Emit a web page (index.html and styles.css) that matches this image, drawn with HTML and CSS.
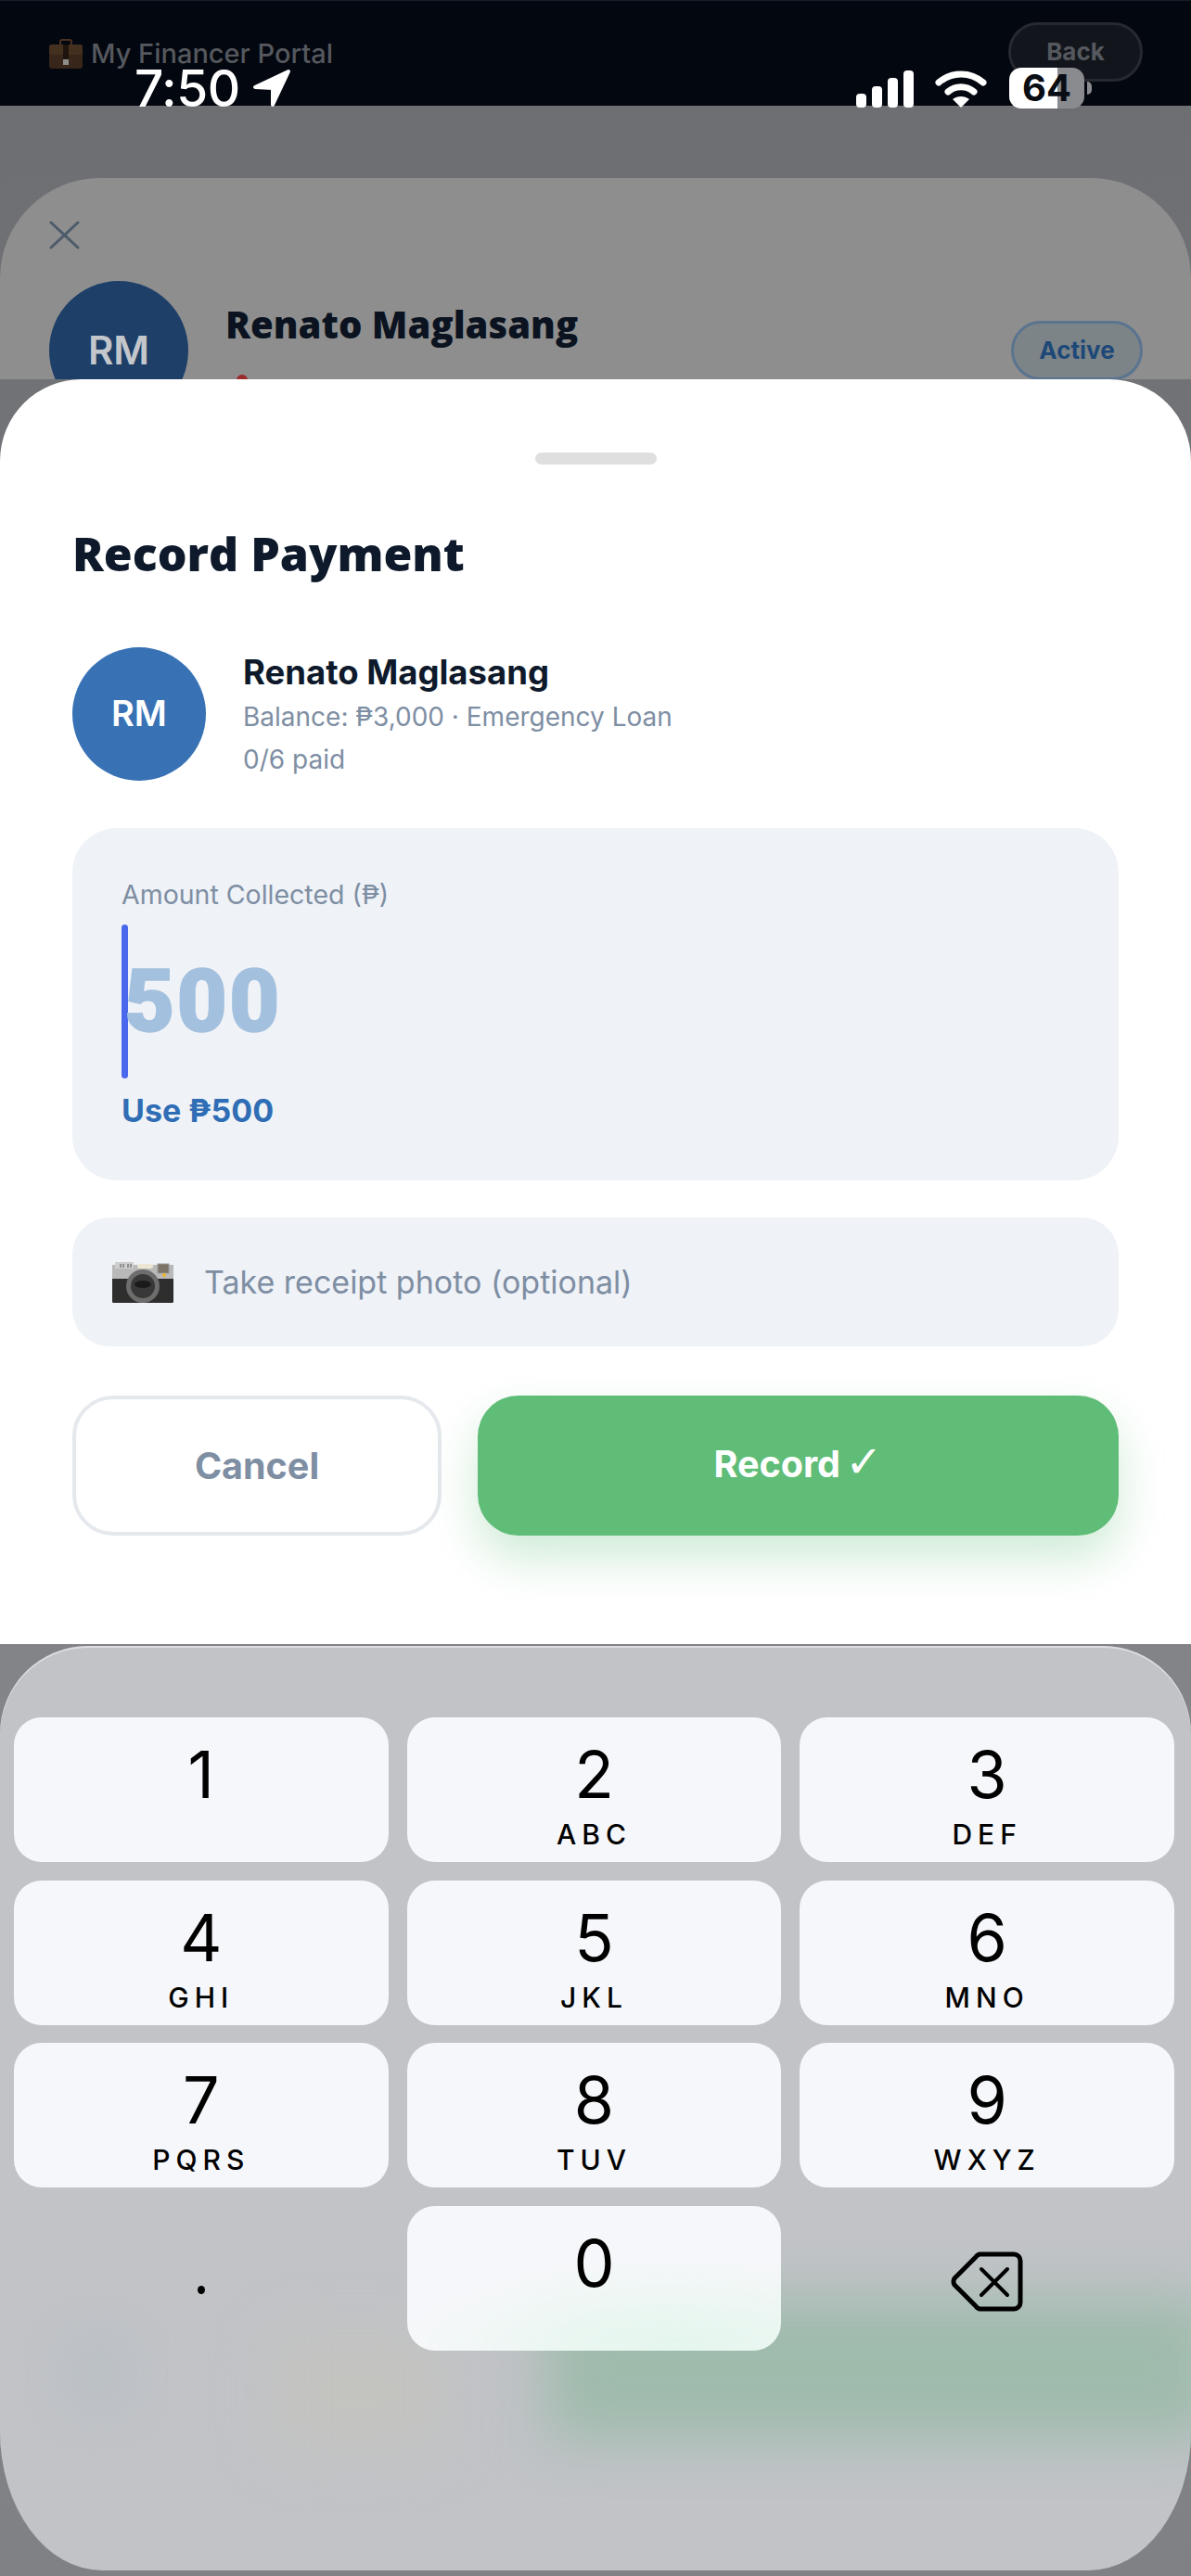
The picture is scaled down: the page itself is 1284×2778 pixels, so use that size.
FILE: index.html
```html
<!DOCTYPE html>
<html lang="en">
<head>
    <meta charset="UTF-8">
    <meta name="viewport" content="width=device-width, initial-scale=1.0">
    <title>My Financer Portal - Record Payment</title>
    <link rel="stylesheet" href="styles.css">
</head>
<body>
    <div class="screen">
        <!-- Phone status bar, sits over the app header -->
        <div class="status-bar">
            <div class="status-left">
                <span class="status-time">7:50</span>
                <svg class="status-arrow" viewBox="0 0 42 42"><path d="M39 3 L3 20 L22 21 L22 39 Z" fill="#fff" stroke="#fff" stroke-width="4" stroke-linejoin="round"/></svg>
            </div>
            <div class="status-right">
                <div class="signal">
                    <span class="bar bar-1"></span>
                    <span class="bar bar-2"></span>
                    <span class="bar bar-3"></span>
                    <span class="bar bar-4"></span>
                </div>
                <svg class="wifi" viewBox="0 0 56 40">
                    <path d="M4 13 C18 1 38 1 52 13" fill="none" stroke="#fff" stroke-width="7" stroke-linecap="round"/>
                    <path d="M14 23 C22 16 34 16 42 23" fill="none" stroke="#fff" stroke-width="7" stroke-linecap="round"/>
                    <path d="M19 31 C24 27 32 27 37 31 L28 40 Z" fill="#fff"/>
                </svg>
                <div class="battery">
                    <span class="battery-level">64</span>
                </div>
                <span class="battery-nub"></span>
            </div>
        </div>

        <!-- App header behind the modal -->
        <header class="app-bar">
            <div class="brand">
                <svg class="brand-icon" viewBox="0 0 36 32">
                    <path d="M12 7 V3 a2 2 0 0 1 2-2 h8 a2 2 0 0 1 2 2 V7" fill="none" stroke="#4a3020" stroke-width="2"/>
                    <rect x="0" y="6" width="36" height="26" rx="3" fill="#38261a"/>
                    <rect x="0" y="6" width="36" height="11" rx="3" fill="#44301f"/>
                    <rect x="15" y="6" width="6" height="18" fill="#1f140d"/>
                    <rect x="15" y="22" width="6" height="6" fill="#8d8d8a"/>
                </svg>
                <span>My Financer Portal</span>
            </div>
            <div class="back-btn">Back</div>
        </header>

        <!-- Client sheet peeking out above the payment sheet -->
        <section class="client-sheet">
            <svg class="close-icon" viewBox="0 0 33 31"><path d="M2 2 L31 29 M31 2 L2 29" stroke="#4c5b69" stroke-width="3" stroke-linecap="round"/></svg>
            <div class="client-row">
                <div class="client-avatar">RM</div>
                <div class="client-info">
                    <div class="client-name">Renato Maglasang</div>
                    <span class="client-pin"></span>
                </div>
                <div class="status-pill">Active</div>
            </div>
        </section>

        <!-- Record payment sheet -->
        <section class="pay-sheet">
            <div class="handle"></div>
            <h2 class="pay-title">Record Payment</h2>

            <div class="borrower">
                <div class="borrower-avatar">RM</div>
                <div class="borrower-info">
                    <div class="borrower-name">Renato Maglasang</div>
                    <div class="borrower-meta">Balance: ₱3,000 · Emergency Loan</div>
                    <div class="borrower-meta">0/6 paid</div>
                </div>
            </div>

            <div class="amount-card">
                <div class="amount-label">Amount Collected (₱)</div>
                <div class="amount-input">
                    <span class="caret"></span>
                    <span class="amount-value">500</span>
                </div>
                <div class="amount-hint">Use ₱500</div>
            </div>

            <div class="photo-row">
                <svg class="camera" viewBox="0 0 66 44">
                    <rect x="0" y="3" width="66" height="41" rx="1.5" fill="#2e2e2e"/>
                    <rect x="0" y="3" width="66" height="15" fill="#b9b9b9"/>
                    <rect x="3" y="0" width="20" height="7" rx="1" fill="#cfcfcf"/>
                    <path d="M9 2 v4 M12 2 v4 M17 2 v4 M20 2 v4" stroke="#666" stroke-width="1.2"/>
                    <rect x="27" y="2" width="17" height="5" rx="2.5" fill="#ece6d2"/>
                    <rect x="49" y="2" width="12" height="10" fill="#7b7467" stroke="#999" stroke-width="1"/>
                    <circle cx="33" cy="26" r="18" fill="#6d6d6d"/>
                    <circle cx="33" cy="26" r="13" fill="#383838"/>
                    <ellipse cx="33" cy="24" rx="9" ry="4" fill="#1a1a1a"/>
                    <circle cx="56" cy="14" r="2" fill="#e8b92e"/>
                </svg>
                <span class="photo-text">Take receipt photo (optional)</span>
            </div>

            <div class="action-row">
                <button class="btn-cancel">Cancel</button>
                <button class="btn-record">Record <span class="check">✓</span></button>
            </div>
        </section>

        <!-- Numeric keyboard -->
        <section class="keyboard">
            <span class="blur-blob blob-green"></span>
            <span class="blur-blob blob-blue"></span>
            <span class="blur-blob blob-sand"></span>
            <div class="keys">
                <div class="key"><span class="key-digit">1</span></div>
                <div class="key"><span class="key-digit">2</span><span class="key-letters">ABC</span></div>
                <div class="key"><span class="key-digit">3</span><span class="key-letters">DEF</span></div>
                <div class="key"><span class="key-digit">4</span><span class="key-letters">GHI</span></div>
                <div class="key"><span class="key-digit">5</span><span class="key-letters">JKL</span></div>
                <div class="key"><span class="key-digit">6</span><span class="key-letters">MNO</span></div>
                <div class="key"><span class="key-digit">7</span><span class="key-letters">PQRS</span></div>
                <div class="key"><span class="key-digit">8</span><span class="key-letters">TUV</span></div>
                <div class="key"><span class="key-digit">9</span><span class="key-letters">WXYZ</span></div>
                <div class="key key-plain"><span class="key-dot"></span></div>
                <div class="key key-zero"><span class="key-digit">0</span></div>
                <div class="key key-plain">
                    <svg class="backspace" viewBox="0 0 78 65">
                        <path d="M32 3 H68 a7 7 0 0 1 7 7 V55 a7 7 0 0 1-7 7 H32 a6 6 0 0 1-5-3 L4 36 a7 7 0 0 1 0-7 L27 6 a6 6 0 0 1 5-3 z" fill="none" stroke="#000" stroke-width="5"/>
                        <path d="M33 19 L61 47 M61 19 L33 47" stroke="#000" stroke-width="4" stroke-linecap="round"/>
                    </svg>
                </div>
            </div>
        </section>
    </div>
</body>
</html>
```

FILE: styles.css
```css
* {
    margin: 0;
    padding: 0;
    box-sizing: border-box;
}

body {
    font-family: Inter, 'Noto Sans', 'DejaVu Sans', sans-serif;
    background: #85868a;
}

.screen {
    position: relative;
    width: 1284px;
    height: 2778px;
    overflow: hidden;
    background: linear-gradient(180deg, #6c6d71 0%, #85868a 70%, #808185 100%);
}

/* Status bar */
.status-bar {
    position: absolute;
    top: 73px;
    left: 0;
    right: 0;
    height: 44px;
    padding: 0 107px 0 145px;
    display: flex;
    justify-content: space-between;
    align-items: center;
    z-index: 5;
    color: #fff;
}

.status-left {
    display: flex;
    align-items: center;
    gap: 13px;
}

.status-time {
    font-size: 55px;
    line-height: 44px;
    font-weight: 500;
    letter-spacing: -0.5px;
}

.status-arrow {
    width: 42px;
    height: 42px;
}

.status-right {
    display: flex;
    align-items: center;
}

.signal {
    display: flex;
    align-items: flex-end;
    gap: 6px;
    height: 40px;
    margin-top: 2px;
}

.bar {
    width: 11px;
    background: #fff;
    border-radius: 4px;
}

.bar-1 { height: 15px; }
.bar-2 { height: 23px; }
.bar-3 { height: 32px; }
.bar-4 { height: 40px; }

.wifi {
    width: 56px;
    height: 40px;
    margin: 2px 24px 0 23px;
}

.battery {
    width: 81px;
    height: 44px;
    border-radius: 13px;
    background: linear-gradient(90deg, #fff 0, #fff 64%, #8a8b8f 64%, #8a8b8f 100%);
    color: #0a0d14;
    text-align: center;
    font-size: 40px;
    line-height: 44px;
    font-weight: 700;
}

.battery-nub {
    width: 5px;
    height: 14px;
    margin-left: 3px;
    background: #8a8b8f;
    border-radius: 0 5px 5px 0;
}

/* App header */
.app-bar {
    height: 114px;
    padding: 23px 52px 0 53px;
    background: #03070f;
    border-top: 1px solid #1a1d28;
    display: flex;
    justify-content: space-between;
    align-items: flex-start;
}

.brand {
    display: flex;
    align-items: center;
    gap: 9px;
    margin-top: 17px;
    color: #55585e;
    font-size: 29px;
    line-height: 34px;
    font-weight: 500;
}

.brand-icon {
    width: 36px;
    height: 32px;
}

.back-btn {
    width: 145px;
    height: 64px;
    border: 3px solid #26292f;
    border-radius: 32px;
    background: #12151b;
    color: #55585e;
    font-size: 26px;
    font-weight: 700;
    line-height: 58px;
    text-align: center;
}

/* Client sheet */
.client-sheet {
    height: 217px;
    margin-top: 78px;
    padding: 46px 52px 0 53px;
    background: #8e8e8e;
    border-radius: 108px 108px 0 0;
    overflow: hidden;
}

.close-icon {
    display: block;
    width: 33px;
    height: 31px;
}

.client-row {
    display: flex;
    margin-top: 34px;
}

.client-avatar {
    flex: none;
    width: 150px;
    height: 150px;
    border-radius: 50%;
    background: #1d3f68;
    color: #c3c7cb;
    font-size: 42px;
    font-weight: 600;
    line-height: 150px;
    text-align: center;
}

.client-info {
    margin: 22px 0 0 40px;
}

.client-name {
    color: #0b1320;
    font-family: 'Open Sans', sans-serif;
    font-size: 40px;
    font-weight: 800;
    line-height: 50px;
}

.client-pin {
    display: block;
    width: 12px;
    height: 12px;
    margin: 29px 0 0 12px;
    border-radius: 50%;
    background: #9b2a2a;
}

.status-pill {
    width: 142px;
    height: 64px;
    margin: 43px 0 0 auto;
    border: 3px solid #5a7490;
    border-radius: 32px;
    background: #7d8488;
    color: #1d4878;
    font-size: 26px;
    font-weight: 700;
    line-height: 58px;
    text-align: center;
}

/* Payment sheet */
.pay-sheet {
    height: 1364px;
    padding: 79px 78px 0;
    background: #fff;
    border-radius: 88px 88px 0 0;
}

.handle {
    width: 131px;
    height: 13px;
    margin: 0 auto;
    border-radius: 7px;
    background: #dfdfdf;
}

.pay-title {
    margin-top: 66px;
    color: #0e1a2b;
    font-family: 'Open Sans', sans-serif;
    font-size: 50px;
    font-weight: 800;
    line-height: 60px;
}

.borrower {
    display: flex;
    margin-top: 71px;
}

.borrower-avatar {
    flex: none;
    width: 144px;
    height: 144px;
    border-radius: 50%;
    background: #3872b5;
    color: #fff;
    font-size: 38px;
    font-weight: 600;
    line-height: 142px;
    text-align: center;
}

.borrower-info {
    margin-left: 40px;
    padding-top: 3px;
}

.borrower-name {
    color: #0e1a2b;
    font-size: 36.5px;
    font-weight: 700;
    line-height: 49px;
}

.borrower-meta {
    color: #7e8ea3;
    font-size: 28px;
    line-height: 46px;
}

.amount-card {
    margin-top: 51px;
    padding: 52px 53px 55px;
    border-radius: 48px;
    background: #eff2f7;
}

.amount-label {
    color: #7e8ea3;
    font-size: 28.5px;
    line-height: 40px;
}

.amount-input {
    display: flex;
    align-items: center;
    height: 166px;
    margin-top: 12px;
}

.caret {
    width: 7px;
    height: 166px;
    border-radius: 4px;
    background: #4a68ee;
}

.amount-value {
    margin-left: -4px;
    color: #a3c0de;
    font-family: Roboto, sans-serif;
    font-size: 94px;
    font-weight: 900;
    line-height: 100px;
    letter-spacing: 2px;
    -webkit-text-stroke: 1.5px #a3c0de;
}

.amount-hint {
    margin-top: 15px;
    color: #2f6db5;
    font-size: 34px;
    font-weight: 700;
    line-height: 40px;
}

.photo-row {
    display: flex;
    align-items: center;
    gap: 33px;
    height: 139px;
    margin-top: 40px;
    padding-left: 43px;
    border-radius: 40px;
    background: #eff2f7;
}

.camera {
    width: 66px;
    height: 44px;
}

.photo-text {
    color: #7e8ea3;
    font-size: 34px;
}

.action-row {
    display: flex;
    gap: 39px;
    margin-top: 53px;
}

.action-row button {
    height: 151px;
    border-radius: 44px;
    font-family: inherit;
    font-size: 39.5px;
    font-weight: 700;
}

.btn-cancel {
    width: 398px;
    border: 4px solid #e5e8ec;
    background: #fff;
    color: #7e8ea3;
}

.btn-record {
    flex: 1;
    padding-bottom: 4px;
    border: none;
    background: #5fbd78;
    color: #fff;
    box-shadow: 0 24px 50px rgba(95, 189, 120, 0.3);
}

.check {
    margin-left: -4px;
    font-family: 'DejaVu Sans', sans-serif;
    font-size: 48px;
    font-weight: 400;
    line-height: 40px;
}

/* Keyboard */
.keyboard {
    position: relative;
    height: 997px;
    margin-top: 2px;
    padding: 77px 18px 0 15px;
    background: #c1c3c7;
    border-radius: 95px 95px 110px 110px / 95px 95px 150px 150px;
    box-shadow: inset 0 2px 0 rgba(255, 255, 255, 0.45);
    overflow: hidden;
}

.blur-blob {
    position: absolute;
    filter: blur(30px);
}

.blob-green {
    left: 590px;
    top: 705px;
    width: 720px;
    height: 150px;
    background: #9ebbac;
}

.blob-blue {
    left: 85px;
    top: 760px;
    width: 40px;
    height: 50px;
    background: #b0bdc6;
}

.blob-sand {
    left: 290px;
    top: 740px;
    width: 190px;
    height: 130px;
    background: #c3c3c0;
}

.keys {
    position: relative;
    display: grid;
    grid-template-columns: repeat(3, 1fr);
    grid-auto-rows: 156px;
    column-gap: 20px;
    row-gap: 19.7px;
}

.key {
    display: flex;
    flex-direction: column;
    align-items: center;
    padding-top: 28px;
    border-radius: 30px;
    background: rgba(252, 253, 255, 0.9);
    color: #000;
}

.key-zero {
    background: radial-gradient(ellipse 300px 100px at 72% 100%, #e4f6ed 0%, rgba(228, 246, 237, 0) 100%), rgba(252, 253, 255, 0.9);
}

.key-plain {
    justify-content: center;
    padding-top: 0;
    background: none;
}

.key-digit {
    font-size: 70px;
    line-height: 68px;
}

.key-letters {
    margin-top: 13px;
    font-size: 30px;
    line-height: 34px;
    font-weight: 500;
    letter-spacing: 6px;
}

.key-dot {
    width: 8px;
    height: 9px;
    margin-top: 24px;
    border-radius: 50%;
    background: #000;
}

.backspace {
    width: 78px;
    height: 65px;
    margin-top: 7px;
}
```
